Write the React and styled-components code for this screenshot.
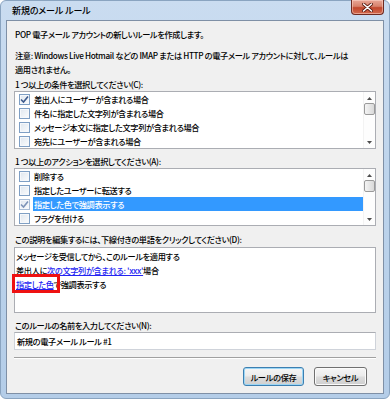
import React from "react";
import styled, { createGlobalStyle } from "styled-components";

const Global = createGlobalStyle`
  html, body { margin: 0; padding: 0; background: #ffffff; }
  body {
    font-family: "Noto Sans CJK JP", "Noto Sans", sans-serif;
    font-feature-settings: "palt";
  }
  * { box-sizing: border-box; }
`;

const Frame = styled.div`
  position: relative;
  width: 390px;
  height: 399px;
  background: linear-gradient(180deg, #cadcf0 0%, #bcd3eb 50%, #b4cde8 100%);
  border: 1px solid #8aa4c0;
  border-radius: 6px;
  padding: 0 5px 4px 5px;
  display: flex;
  flex-direction: column;
`;

const TitleBar = styled.div`
  height: 19px;
  display: flex;
  align-items: center;
  padding-left: 6px;
  font-size: 9px;
  font-weight: 500;
  color: #000;
  letter-spacing: -0.1px;
  white-space: nowrap;
`;

const CloseButton = styled.div`
  position: absolute;
  top: -1px;
  right: 5px;
  width: 33px;
  height: 15px;
  border: 1px solid #6e2a20;
  border-top: none;
  border-radius: 0 0 4px 4px;
  background: linear-gradient(180deg, #e9a797 0%, #d8826c 45%, #c2472d 55%, #d26a4e 100%);
  box-shadow: inset 0 0 0 1px rgba(255, 220, 210, 0.5);
  display: flex;
  align-items: center;
  justify-content: center;
`;

const Client = styled.div`
  flex: 1;
  background: #f0f0f0;
  border: 1px solid #7f90a6;
  padding: 6px 7px 0 7px;
  display: flex;
  flex-direction: column;
  font-size: 8.2px;
  font-weight: 500;
  color: #000;
`;

const Text = styled.div`
  line-height: 14px;
  padding-left: 1px;
  margin-top: ${(p) => p.$mt || 0}px;
  white-space: nowrap;
  letter-spacing: -0.35px;
`;

const Label = styled(Text)`
  line-height: 13px;
`;

const ListBox = styled.div`
  height: 58px;
  background: #fff;
  border: 1px solid #abadb3;
  display: flex;
`;

const Rows = styled.div`
  flex: 1;
  display: flex;
  flex-direction: column;
  overflow: hidden;
`;

const Row = styled.div`
  height: 14px;
  display: flex;
  align-items: center;
  padding-left: 4px;
  white-space: nowrap;
`;

const Box = styled.div`
  width: 11px;
  height: 11px;
  flex: none;
  border: 1px solid ${(p) => (p.$dim ? "#a9bdd6" : "#7f9fc4")};
  background: linear-gradient(135deg, #dfe6ee 0%, #fbfcfd 100%);
  box-shadow: inset 0 0 0 1px #f6f8fb;
  display: flex;
  align-items: center;
  justify-content: center;
  margin-right: 3px;
`;

const RowText = styled.div`
  flex: 1;
  height: 14px;
  line-height: 14px;
  padding-left: 1px;
  letter-spacing: -0.35px;
  background: ${(p) => (p.$selected ? "#3399ff" : "transparent")};
  color: ${(p) => (p.$selected ? "#fff" : "#000")};
`;

const ScrollBar = styled.div`
  width: 12px;
  flex: none;
  background: #fdfdfd;
  border-left: 1px solid #f3f3f3;
  display: flex;
  flex-direction: column;
  align-items: center;
  padding-top: 5px;
  padding-bottom: 4px;
`;

const Thumb = styled.div`
  width: 11px;
  height: 12px;
  margin-top: 3px;
  border: 1px solid #9a9a9a;
  border-radius: 2px;
  background: linear-gradient(90deg, #f4f4f4 0%, #e6e6e6 50%, #d9d9d9 100%);
`;

const Spacer = styled.div`
  flex: 1;
`;

const DescBox = styled.div`
  position: relative;
  margin-top: 1px;
  height: 66px;
  background: #fff;
  border: 1px solid #abadb3;
  padding: 1px 0 0 0;
`;

const Link = styled.span`
  color: #2424f2;
  text-decoration: underline;
  text-underline-offset: 1px;
`;

const RedMark = styled.div`
  position: absolute;
  left: -3px;
  top: 26px;
  width: 48px;
  height: 19px;
  border: 3px solid #ee1111;
`;

const Input = styled.div`
  height: 18px;
  background: #fff;
  border: 1px solid #cfd3da;
  border-top-color: #abadb3;
  padding-left: 2px;
  line-height: 16px;
  white-space: nowrap;
  letter-spacing: -0.35px;
`;

const Separator = styled.div`
  margin-top: 7px;
  height: 2px;
  border-top: 1px solid #a0a0a0;
  border-bottom: 1px solid #ffffff;
`;

const ButtonRow = styled.div`
  margin-top: 8px;
  display: flex;
  justify-content: flex-end;
  gap: 10px;
  padding-right: 9px;
`;

const Button = styled.div`
  width: ${(p) => p.$w}px;
  height: 19px;
  border: 1px solid ${(p) => (p.$default ? "#3c7fb1" : "#707070")};
  border-radius: 3px;
  background: linear-gradient(180deg, #f6f6f6 0%, #ebebeb 48%, #dddddd 52%, #cfcfcf 100%);
  box-shadow: inset 0 0 0 1px ${(p) => (p.$default ? "#9cd6f5" : "#fbfbfb")};
  display: flex;
  align-items: center;
  justify-content: center;
  font-size: 8.2px;
  letter-spacing: -0.3px;
  white-space: nowrap;
`;

const Check = ({ dim }) => (
  <svg width="9" height="9" viewBox="0 0 9 9">
    <path d="M1 4.5 L3.5 7 L8 1.5" fill="none" stroke={dim ? "#7d93b8" : "#3e5a8c"} strokeWidth="1.6" />
  </svg>
);

const Arrow = ({ up }) => (
  <svg width="5" height="3" viewBox="0 0 5 3">
    <path d={up ? "M0 3 L2.5 0 L5 3 Z" : "M0 0 L2.5 3 L5 0 Z"} fill="#4d4d4d" />
  </svg>
);

const Scroll = () => (
  <ScrollBar>
    <Arrow up />
    <Thumb />
    <Spacer />
    <Arrow />
  </ScrollBar>
);

const ListItems = ({ items }) => (
  <Rows>
    {items.map((it) => (
      <Row key={it.t}>
        <Box $dim={it.s}>{it.c && <Check dim={it.s} />}</Box>
        <RowText $selected={it.s}>{it.t}</RowText>
      </Row>
    ))}
  </Rows>
);

const conditions = [
  { t: "差出人にユーザーが含まれる場合", c: true },
  { t: "件名に指定した文字列が含まれる場合" },
  { t: "メッセージ本文に指定した文字列が含まれる場合" },
  { t: "宛先にユーザーが含まれる場合" },
];

const actions = [
  { t: "削除する" },
  { t: "指定したユーザーに転送する" },
  { t: "指定した色で強調表示する", c: true, s: true },
  { t: "フラグを付ける" },
];

export default function App() {
  return (
    <>
      <Global />
      <Frame>
        <TitleBar>新規のメール ルール</TitleBar>
        <CloseButton>
          <svg width="11" height="9" viewBox="0 0 11 9">
            <path d="M1.5 1 L9.5 8 M9.5 1 L1.5 8" stroke="#5a1a10" strokeWidth="3.2" strokeLinecap="round" />
            <path d="M1.5 1 L9.5 8 M9.5 1 L1.5 8" stroke="#ffffff" strokeWidth="1.6" strokeLinecap="round" />
          </svg>
        </CloseButton>
        <Client>
          <Text>POP 電子メール アカウントの新しいルールを作成します。</Text>
          <Text $mt={7}>
            注意: Windows Live Hotmail などの IMAP または HTTP の電子メール アカウントに対して、ルールは
          </Text>
          <Text>適用されません。</Text>
          <Label $mt={2}>1 つ以上の条件を選択してください(C):</Label>
          <ListBox>
            <ListItems items={conditions} />
            <Scroll />
          </ListBox>
          <Label $mt={6}>1 つ以上のアクションを選択してください(A):</Label>
          <ListBox>
            <ListItems items={actions} />
            <Scroll />
          </ListBox>
          <Label $mt={7}>この説明を編集するには、下線付きの単語をクリックしてください(D):</Label>
          <DescBox>
            <Text>メッセージを受信してから、このルールを適用する</Text>
            <Text>
              差出人に<Link>次の文字列が含まれる: 'xxx'</Link>場合
            </Text>
            <Text>
              <Link>指定した色</Link>で強調表示する
            </Text>
            <RedMark />
          </DescBox>
          <Label $mt={6}>このルールの名前を入力してください(N):</Label>
          <Input>新規の電子メール ルール #1</Input>
          <Separator />
          <ButtonRow>
            <Button $default $w={61}>ルールの保存</Button>
            <Button $w={53}>キャンセル</Button>
          </ButtonRow>
        </Client>
      </Frame>
    </>
  );
}
